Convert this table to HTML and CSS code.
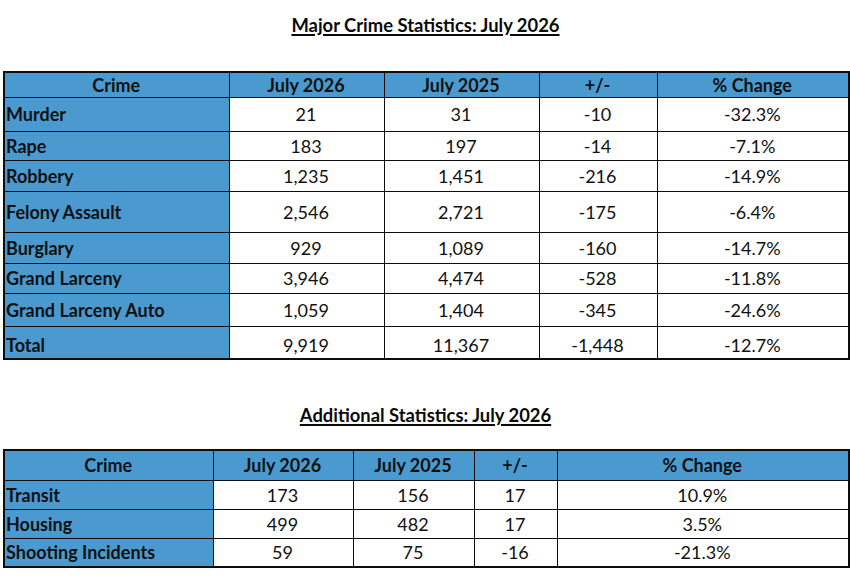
FILE: index.html
```html
<!DOCTYPE html>
<html lang="en">
<head>
<meta charset="utf-8">
<title>Major Crime Statistics: July 2026</title>
<link rel="stylesheet" href="styles.css">
</head>
<body>
<main class="page">
  <section class="block block-major">
    <h1 class="title">Major Crime Statistics: July 2026</h1>
    <table class="stats stats-major">
      <colgroup>
        <col class="c1"><col class="c2"><col class="c3"><col class="c4"><col class="c5">
      </colgroup>
      <thead>
        <tr class="r-head"><th>Crime</th><th>July 2026</th><th>July 2025</th><th>+/-</th><th>% Change</th></tr>
      </thead>
      <tbody>
        <tr class="r34"><th>Murder</th><td>21</td><td>31</td><td>-10</td><td>-32.3%</td></tr>
        <tr class="r29"><th>Rape</th><td>183</td><td>197</td><td>-14</td><td>-7.1%</td></tr>
        <tr class="r31"><th>Robbery</th><td>1,235</td><td>1,451</td><td>-216</td><td>-14.9%</td></tr>
        <tr class="r41"><th>Felony Assault</th><td>2,546</td><td>2,721</td><td>-175</td><td>-6.4%</td></tr>
        <tr class="r31"><th>Burglary</th><td>929</td><td>1,089</td><td>-160</td><td>-14.7%</td></tr>
        <tr class="r30"><th>Grand Larceny</th><td>3,946</td><td>4,474</td><td>-528</td><td>-11.8%</td></tr>
        <tr class="r33"><th>Grand Larceny Auto</th><td>1,059</td><td>1,404</td><td>-345</td><td>-24.6%</td></tr>
        <tr class="r33 r-total"><th>Total</th><td>9,919</td><td>11,367</td><td>-1,448</td><td>-12.7%</td></tr>
      </tbody>
    </table>
  </section>

  <section class="block block-extra">
    <h2 class="title">Additional Statistics: July 2026</h2>
    <table class="stats stats-extra">
      <colgroup>
        <col class="d1"><col class="d2"><col class="d3"><col class="d4"><col class="d5">
      </colgroup>
      <thead>
        <tr class="r-head2"><th>Crime</th><th>July 2026</th><th>July 2025</th><th>+/-</th><th>% Change</th></tr>
      </thead>
      <tbody>
        <tr class="r29"><th>Transit</th><td>173</td><td>156</td><td>17</td><td>10.9%</td></tr>
        <tr class="r29"><th>Housing</th><td>499</td><td>482</td><td>17</td><td>3.5%</td></tr>
        <tr class="r29"><th>Shooting Incidents</th><td>59</td><td>75</td><td>-16</td><td>-21.3%</td></tr>
      </tbody>
    </table>
  </section>
</main>
</body>
</html>
```

FILE: styles.css
```css
* { box-sizing: border-box; }

html, body {
  margin: 0;
  padding: 0;
  background: #ffffff;
}

body {
  font-family: "Lato", "Open Sans", "Liberation Sans", sans-serif;
  color: #111111;
  width: 850px;
  height: 582px;
  overflow: hidden;
}

.page {
  display: flex;
  flex-direction: column;
  padding: 0 2px 0 3px;
}

.block {
  display: flex;
  flex-direction: column;
  align-items: stretch;
}

.title {
  margin: 0;
  font-size: 18.4px;
  font-weight: 700;
  line-height: 24px;
  text-align: center;
  text-decoration: underline;
  text-decoration-thickness: 1.5px;
  text-underline-offset: 2px;
  color: #0a0a0a;
}

.block-major .title {
  padding-top: 13px;
  margin-bottom: 34px;
}

.block-extra .title {
  margin-top: 43px;
  margin-bottom: 22px;
}

.stats {
  width: 845px;
  border-collapse: collapse;
  table-layout: fixed;
  border: 2px solid #0d0d0d;
  font-size: 18px;
}

.stats th,
.stats td {
  border: 1px solid #0d0d0d;
  padding: 0 2px 0 1px;
  vertical-align: middle;
  white-space: nowrap;
}

.stats thead th {
  background: #4a9ad0;
  font-weight: 700;
  text-align: center;
}

.stats tbody th {
  background: #4a9ad0;
  font-weight: 700;
  text-align: left;
}

.stats tbody td {
  background: #ffffff;
  font-weight: 400;
  text-align: center;
}

.stats-major .c1 { width: 225px; }
.stats-major .c2 { width: 155px; }
.stats-major .c3 { width: 155px; }
.stats-major .c4 { width: 118px; }
.stats-major .c5 { width: 192px; }

.stats-extra .d1 { width: 209px; }
.stats-extra .d2 { width: 140px; }
.stats-extra .d3 { width: 121px; }
.stats-extra .d4 { width: 83px; }
.stats-extra .d5 { width: 292px; }

.r-head { height: 25px; }
.r-head2 { height: 30px; }
.r29 { height: 29px; }
.r30 { height: 30px; }
.r31 { height: 31px; }
.r33 { height: 33px; }
.r34 { height: 34px; }
.r41 { height: 41px; }

.r-total th,
.r-total td { padding-top: 5px; }
```
